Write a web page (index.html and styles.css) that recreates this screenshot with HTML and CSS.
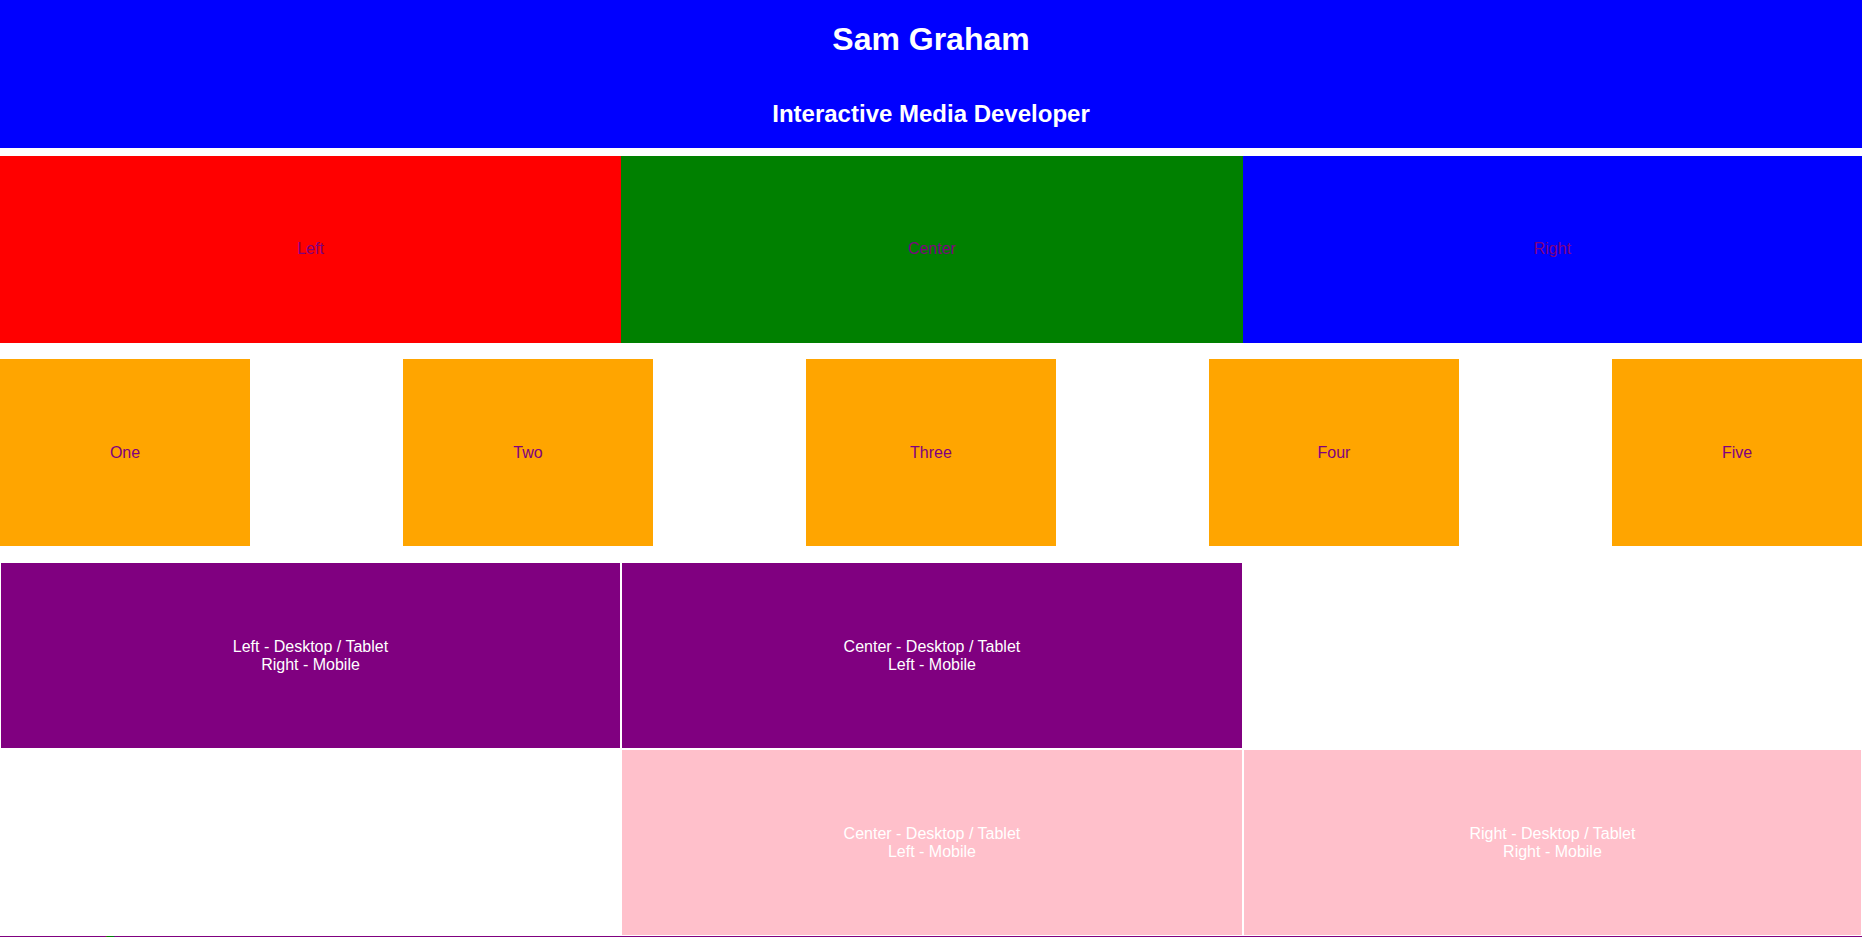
FILE: index.html
```html
<!DOCTYPE html>
<html lang="en">
<head>
<meta charset="utf-8">
<title>Sam Graham</title>
<link rel="stylesheet" href="styles.css">
</head>
<body>
<header class="site-header">
  <h1 class="name">Sam Graham</h1>
  <h2 class="role">Interactive Media Developer</h2>
</header>
<section class="thirds">
  <div class="third red">Left</div>
  <div class="third green">Center</div>
  <div class="third blue">Right</div>
</section>
<section class="boxes">
  <div class="box">One</div>
  <div class="box">Two</div>
  <div class="box">Three</div>
  <div class="box">Four</div>
  <div class="box">Five</div>
</section>
<section class="grid">
  <div class="cell purple">Left - Desktop / Tablet<br>Right - Mobile</div>
  <div class="cell purple">Center - Desktop / Tablet<br>Left - Mobile</div>
  <div class="cell empty"></div>
  <div class="cell empty"></div>
  <div class="cell pink">Center - Desktop / Tablet<br>Left - Mobile</div>
  <div class="cell pink">Right - Desktop / Tablet<br>Right - Mobile</div>
</section>
<footer class="next">
  <div class="next-text">Footer</div>
</footer>
</body>
</html>
```
FILE: styles.css
```css
html, body {
  margin: 0;
  padding: 0;
}
body {
  font-family: "Liberation Sans", Arial, sans-serif;
  font-size: 16px;
  background: #fff;
}
.site-header {
  display: flex;
  flex-direction: column;
  align-items: center;
  background: #0000ff;
  color: #fff;
  margin-bottom: 8px;
}
.name {
  font-size: 32px;
  font-weight: bold;
  margin: 21.44px 0;
}
.role {
  font-size: 24px;
  font-weight: bold;
  margin: 19.92px 0;
}
.thirds {
  display: grid;
  grid-template-columns: 33.35% 33.4% 1fr;
  height: 20vh;
  margin-bottom: 16px;
}
.third {
  display: flex;
  align-items: center;
  justify-content: center;
  color: #800080;
}
.red { background: #ff0000; }
.green { background: #008000; }
.blue { background: #0000ff; }
.boxes {
  display: flex;
  justify-content: space-between;
  margin-bottom: 16px;
}
.box {
  width: 250px;
  height: 20vh;
  background: #ffa500;
  color: #800080;
  display: flex;
  align-items: center;
  justify-content: center;
}
.grid {
  display: grid;
  grid-template-columns: 33.35% 33.4% 1fr;
  grid-auto-rows: 187px;
}
.cell {
  border: 1px solid #fff;
  display: flex;
  align-items: center;
  justify-content: center;
  text-align: center;
  color: #fff;
}
.purple { background: #800080; }
.pink { background: #ffc0cb; }
.empty { background: transparent; }
.next {
  background: #800080;
  color: #008000;
  height: 40px;
  line-height: 14px;
}
.next-text {
  padding-left: 105px;
}
```
